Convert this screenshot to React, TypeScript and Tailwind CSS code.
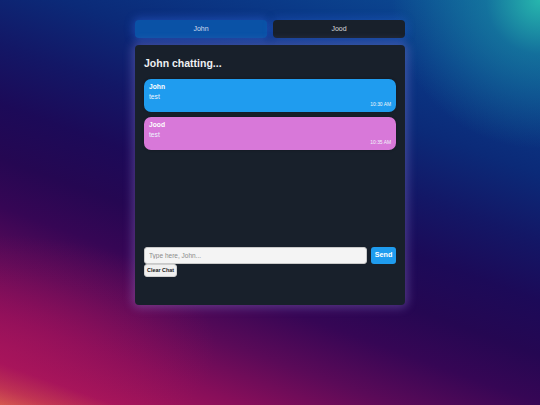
import React from "react";

const messages = [
  { name: "John", text: "test", time: "10:30 AM", color: "bg-[#1f9cef]" },
  { name: "Jood", text: "test", time: "10:35 AM", color: "bg-[#d878d9]" },
];

export default function App() {
  return (
    <div
      className="w-[540px] h-[405px] overflow-hidden flex flex-col items-center pt-[20px] bg-[radial-gradient(circle_at_100%_0%,#27b6ad_0%,rgba(25,140,165,0.6)_8%,rgba(10,70,150,0)_22%),radial-gradient(ellipse_40%_28%_at_0%_86%,rgba(170,20,92,0.5)_0%,rgba(170,20,92,0)_100%),linear-gradient(200deg,#0c5296_0%,#0a3a88_16%,#0b2a78_29%,#131766_40%,#1c0a58_50%,#250752_59%,#360655_67%,#5a0a58_76%,#860e5a_85%,#a6155a_93%,#c8404f_97%,#e4704a_100%)]"
      style={{ fontFamily: '"Liberation Sans", Arial, sans-serif' }}
    >
      <div className="w-[270px] flex gap-[6px]">
        <button className="flex-1 h-[18px] rounded-[4px] bg-[#0a52a6] text-[#d3deef] text-[7px] shadow-[0_0_8px_2px_rgba(60,120,255,0.35)]">
          John
        </button>
        <button className="flex-1 h-[18px] rounded-[4px] bg-[#18202b] text-[#d8dadd] text-[7px] shadow-[0_0_8px_2px_rgba(60,120,255,0.25)]">
          Jood
        </button>
      </div>

      <div className="mt-[7px] w-[270px] h-[260px] rounded-[4px] bg-[#18202b] p-[9px] flex flex-col shadow-[0_0_10px_3px_rgba(190,170,255,0.28)]">
        <div className="h-[18px] flex items-center text-[10.5px] font-bold text-[#eef0f3] leading-none">
          John chatting...
        </div>
        <div className="mt-[7px] h-[168px] flex flex-col gap-[5px]">
          {messages.map((m) => (
            <div
              key={m.name}
              className={`${m.color} h-[33px] rounded-[7px] px-[5px] pt-[3px] flex flex-col shadow-[0_0_3px_rgba(0,0,0,0.3)]`}
            >
              <div className="text-[6.7px] font-bold text-white leading-[9px]">{m.name}</div>
              <div className="text-[6.7px] text-[#eef6ff] leading-[9px] mt-[1px]">{m.text}</div>
              <div className="text-[4.9px] text-[#f2f6fa] leading-[8px] text-right">{m.time}</div>
            </div>
          ))}
        </div>
        <div className="flex gap-[4px] h-[17px]">
          <input
            className="flex-1 h-[17px] rounded-[3px] bg-[#f4f4f4] border border-[#c9c9c9] px-[4px] text-[6.5px] text-[#333] outline-none placeholder:text-[#8a8a8a]"
            placeholder="Type here, John..."
          />
          <button className="w-[25px] h-[17px] rounded-[3px] bg-[#1f9cef] text-white font-bold text-[7.2px]">
            Send
          </button>
        </div>
        <div className="flex">
          <button className="h-[13px] w-[33px] rounded-[3px] bg-[#f0f0f0] border border-[#d0d0d0] text-[#222] font-bold text-[5.4px] whitespace-nowrap">
            Clear Chat
          </button>
        </div>
      </div>
    </div>
  );
}
